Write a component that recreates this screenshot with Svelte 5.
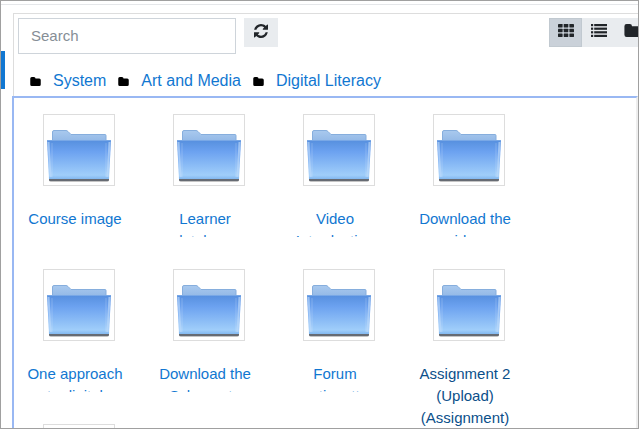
<script lang="ts">
  interface Item {
    name: string;
    open?: boolean;
  }

  const path = ["System", "Art and Media", "Digital Literacy"];

  const items: Item[] = [
    { name: "Course image" },
    { name: "Learner database" },
    { name: "Video Introduction" },
    { name: "Download the video" },
    { name: "One approach to digital literacy" },
    { name: "Download the Scheme to" },
    { name: "Forum netiquette" },
    { name: "Assignment 2 (Upload) (Assignment)", open: true },
    { name: "Resources" },
  ];

  let query = "";
  let view = "icons";
</script>

{#snippet folderGlyph()}
  <svg class="glyph" viewBox="0 0 14 12" aria-hidden="true">
    <path
      d="M2 0h3q2 0 2 2h5q2 0 2 2v6q0 2-2 2H2q-2 0-2-2V2Q0 0 2 0z"
    />
  </svg>
{/snippet}

<div class="window">
  <div class="rail"><span class="marker"></span></div>
  <main>
    <div class="toolbar">
      <input type="text" placeholder="Search" aria-label="Search" bind:value={query} />
      <button class="tool refresh" aria-label="Refresh">
        <svg viewBox="0 0 1536 1536" aria-hidden="true">
          <path
            d="M1511 928q0 5-1 7-64 268-268 434.500T764 1536q-146 0-282.500-55T238 1324l-129 129q-19 19-45 19t-45-19-19-45V960q0-26 19-45t45-19h448q26 0 45 19t19 45-19 45l-137 137q71 66 161 102t187 36q134 0 250-65t186-179q11-17 53-117 8-23 30-23h192q13 0 22.500 9.500T1511 928zM1536 128v448q0 26-19 45t-45 19h-448q-26 0-45-19t-19-45 19-45l138-138Q969 256 768 256q-134 0-250 65T332 500q-11 17-53 117-8 23-30 23H50q-13 0-22.500-9.500T18 608v-7q65-268 270-434.500T768 0q146 0 284 55.500T1297 212l130-129q19-19 45-19t45 19 19 45z"
          />
        </svg>
      </button>
      <div class="views">
        <button
          class="tool"
          class:active={view === "icons"}
          aria-label="Display folder with file icons"
          on:click={() => (view = "icons")}
        >
          <svg viewBox="0 0 16 13" aria-hidden="true">
            {#each [0, 4.8, 9.6] as y}
              {#each [0, 5.7, 11.4] as x}
                <rect {x} {y} width="4.6" height="3.4" rx="0.4" />
              {/each}
            {/each}
          </svg>
        </button>
        <button
          class="tool"
          class:active={view === "list"}
          aria-label="Display folder with file details"
          on:click={() => (view = "list")}
        >
          <svg viewBox="0 0 16 13" aria-hidden="true">
            {#each [0, 3.6, 7.2, 10.8] as y}
              <rect x="0" {y} width="2.2" height="2.2" />
              <rect x="3.2" {y} width="12.8" height="2.2" />
            {/each}
          </svg>
        </button>
        <button
          class="tool"
          class:active={view === "tree"}
          aria-label="Display folder as file tree"
          on:click={() => (view = "tree")}
        >
          {@render folderGlyph()}
        </button>
      </div>
    </div>

    <nav aria-label="Folder path">
      {#each path as folder}
        <span class="crumb">
          {@render folderGlyph()}
          <a href="#folder">{folder}</a>
        </span>
      {/each}
    </nav>

    <div class="files">
      {#each items as item}
        <a class="file" class:open={item.open} href="#file">
          <span class="thumb">
            <svg viewBox="0 0 70 70" aria-hidden="true">
              <defs>
                <linearGradient id="front" x1="0" y1="0" x2="0" y2="1">
                  <stop offset="0" stop-color="#568fde" />
                  <stop offset="0.3" stop-color="#6ca2f0" />
                  <stop offset="0.9" stop-color="#a0cefa" />
                  <stop offset="1" stop-color="#82b8f0" />
                </linearGradient>
                <linearGradient id="back" x1="0" y1="0" x2="0" y2="1">
                  <stop offset="0" stop-color="#a9c9ee" />
                  <stop offset="1" stop-color="#8bb3e4" />
                </linearGradient>
              </defs>
              <path
                d="M8.500 30V17q0-1.500 1.500-1.500h12q1 0 2 1l3 3h34q1 0 1 1V30z"
                fill="url(#back)"
                stroke="#86aedd"
              />
              <path d="M5 64h60v1q0 2-3 2H8q-3 0-3-2z" fill="#c4c4c4" />
              <path d="M5 63h60v2q0 1-1 1H6q-1 0-1-1z" fill="#666b73" />
              <path d="M3 25h64l-2 39H5z" fill="url(#front)" />
              <path d="M3 25.500h64" stroke="#79a8e6" />
              <path
                d="M4.500 27l2 35M65.500 27l-2 35"
                stroke="#c4defb"
                stroke-width="2"
                opacity="0.6"
              />
              <path d="M8 28v34M62 28v34" stroke="#fff" opacity="0.2" />
            </svg>
          </span>
          <span class="name">{item.name}</span>
        </a>
      {/each}
    </div>
  </main>
</div>

<style>
  .window {
    box-sizing: border-box;
    display: flex;
    height: 100vh;
    overflow: hidden;
    border: 1px solid #a0a0a0;
    background: #fff;
    color: #212529;
    font: 15px/22px "Liberation Sans", Arial, sans-serif;
  }

  .rail {
    flex: 0 0 11px;
    margin-top: 3px;
    border-top: 1px solid #e5e7ea;
  }

  .marker {
    display: block;
    width: 4px;
    height: 38px;
    margin-top: 46px;
    background: #1177d1;
  }

  main {
    flex: 1;
    min-width: 0;
    display: flex;
    flex-direction: column;
    margin-top: 3px;
    border-top: 1px solid #e5e7ea;
  }

  .toolbar {
    display: flex;
    align-items: flex-start;
    margin: 8px 0 0 1px;
    padding: 4px 0 0 4px;
    border-top: 1px solid #ddd;
    border-left: 1px solid #ddd;
  }

  input {
    box-sizing: border-box;
    width: 218px;
    height: 36px;
    padding: 0 12px 1px;
    border: 1px solid #ced4da;
    color: #495057;
    font: inherit;
  }

  input::placeholder {
    color: #868e96;
    opacity: 1;
  }

  .tool {
    display: flex;
    flex: none;
    justify-content: center;
    width: 33px;
    height: 29px;
    padding: 6px 0;
    border: 0;
    background: #e9ecef;
    cursor: pointer;
  }

  .tool.active {
    border: 1px solid #c1c9d0;
    padding: 5px 0;
    background: #cad1d9;
  }

  .tool svg {
    width: 16px;
    height: 13px;
    fill: #212529;
  }

  .refresh {
    width: 34px;
    margin-left: 8px;
  }

  .refresh svg {
    width: 14px;
    height: 14px;
  }

  .views {
    display: flex;
    width: 89px;
    margin-left: auto;
    overflow: hidden;
  }

  nav {
    display: flex;
    gap: 12px;
    margin-left: 1px;
    padding: 16px 0 4px 16px;
    border-left: 1px solid #ddd;
    font-size: 16px;
  }

  .crumb {
    display: flex;
    align-items: center;
    gap: 12px;
  }

  .crumb .glyph {
    width: 11px;
    height: 9px;
    fill: #000;
  }

  a {
    color: #1177d1;
    text-decoration: none;
  }

  .files {
    flex: 1;
    min-height: 0;
    display: grid;
    grid-template-columns: repeat(auto-fill, 130px);
    grid-auto-rows: 155px;
    align-content: start;
    padding-right: 80px;
    overflow: hidden;
    border-top: 2px solid #99b8f3;
    border-left: 2px solid #99b8f3;
    border-right: 2px solid #eee;
  }

  .file {
    padding: 16px 15px 0 11px;
  }

  .thumb {
    display: block;
    width: 70px;
    margin-left: 18px;
    border: 1px solid #ddd;
  }

  .thumb svg {
    display: block;
    width: 70px;
    height: 70px;
  }

  /* closed names show one line and the top of the next */
  .name {
    display: block;
    width: 100px;
    height: 29px;
    margin-top: 22px;
    overflow: hidden;
    text-align: center;
  }

  .open {
    color: #0b4f8a;
  }

  .open .name {
    height: auto;
    overflow: visible;
  }
</style>
